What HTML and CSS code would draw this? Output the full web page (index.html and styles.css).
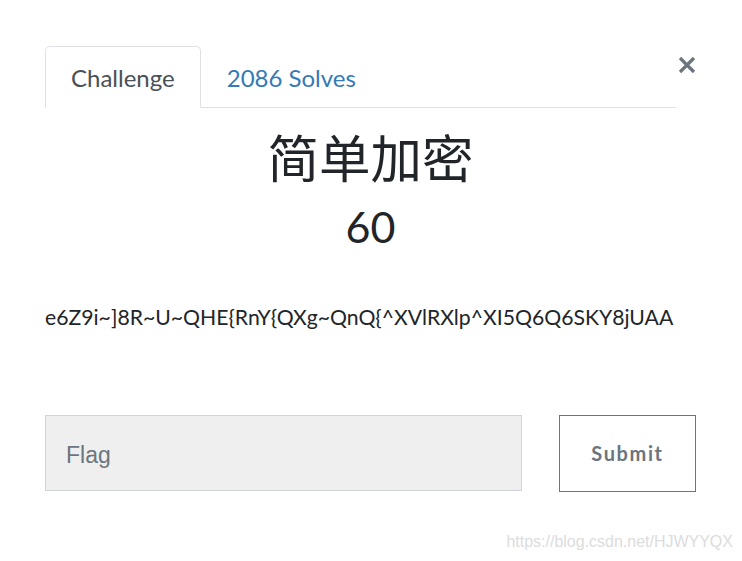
FILE: index.html
```html
<!DOCTYPE html>
<html lang="zh-CN">
<head>
    <meta charset="UTF-8">
    <meta name="viewport" content="width=device-width, initial-scale=1.0">
    <title>简单加密</title>
    <link rel="stylesheet" href="styles.css">
</head>
<body>
    <div class="modal">
        <div class="modal-header">
            <ul class="tabs">
                <li class="tab active">Challenge</li>
                <li class="tab">2086 Solves</li>
            </ul>
            <button class="close" aria-label="Close">
                <svg width="18" height="18" viewBox="0 0 18 18">
                    <path d="M2 2 L16 16 M16 2 L2 16" stroke="#6c757d" stroke-width="3.2"/>
                </svg>
            </button>
        </div>

        <h2 class="title">简单加密</h2>
        <h3 class="value">60</h3>

        <p class="desc">e6Z9i~]8R~U~QHE{RnY{QXg~QnQ{^XVlRXlp^XI5Q6Q6SKY8jUAA</p>

        <form class="flag-form" onsubmit="return false;">
            <input class="flag-input" type="text" placeholder="Flag">
            <button class="submit" type="submit">Submit</button>
        </form>
    </div>

    <div class="watermark">https://blog.csdn.net/HJWYYQX</div>
</body>
</html>
```

FILE: styles.css
```css
body {
    margin: 0;
    background: #fff;
    font-family: Lato, "Noto Sans CJK SC", sans-serif;
    color: #212529;
}
.modal {
    padding: 46px 46px 0 45px;
}
.modal-header {
    display: flex;
    align-items: flex-start;
}
.tabs {
    flex: 1;
    display: flex;
    list-style: none;
    margin: 0;
    padding: 0;
    border-bottom: 1px solid #dee2e6;
}
.tab {
    padding: 0 25px;
    height: 60px;
    line-height: 62px;
    font-size: 24px;
    color: #337ab7;
    border: 1px solid transparent;
    border-radius: 5px 5px 0 0;
    margin-bottom: -1px;
}
.tab.active {
    color: #495057;
    border-color: #dee2e6 #dee2e6 #fff;
    background: #fff;
}
.close {
    width: 20px;
    margin-top: 10px;
    padding: 0;
    border: none;
    background: none;
    display: flex;
    justify-content: flex-end;
    cursor: pointer;
}
.title {
    margin: 20px 0 0;
    text-align: center;
    font-size: 51.5px;
    font-weight: normal;
    line-height: 60px;
}
.value {
    margin: 14px 0 0;
    text-align: center;
    font-size: 43px;
    font-weight: normal;
    line-height: 50px;
}
.desc {
    margin: 51px 0 0;
    font-size: 21.2px;
    line-height: 28px;
}
.flag-form {
    display: flex;
    justify-content: space-between;
    margin-top: 84px;
}
.flag-input {
    width: 477px;
    height: 76px;
    box-sizing: border-box;
    background: #efefef;
    border: 1px solid #d0d3d7;
    padding: 4px 20px 0;
    font-family: "Liberation Sans", Arial, sans-serif;
    font-size: 23px;
    color: #495057;
}
.flag-input::placeholder {
    color: #6c757d;
}
.submit {
    width: 137px;
    height: 77px;
    box-sizing: border-box;
    background: #fff;
    border: 1px solid #6c757d;
    color: #6c757d;
    font-family: Lato, sans-serif;
    font-weight: bold;
    font-size: 20px;
    letter-spacing: 1.6px;
    padding: 0 0 2px;
    cursor: pointer;
}
.watermark {
    position: absolute;
    right: 9px;
    top: 532px;
    font-family: "Liberation Sans", Arial, sans-serif;
    font-size: 17px;
    color: #dcdcdc;
    transform: scaleX(0.94);
    transform-origin: right;
}
```
